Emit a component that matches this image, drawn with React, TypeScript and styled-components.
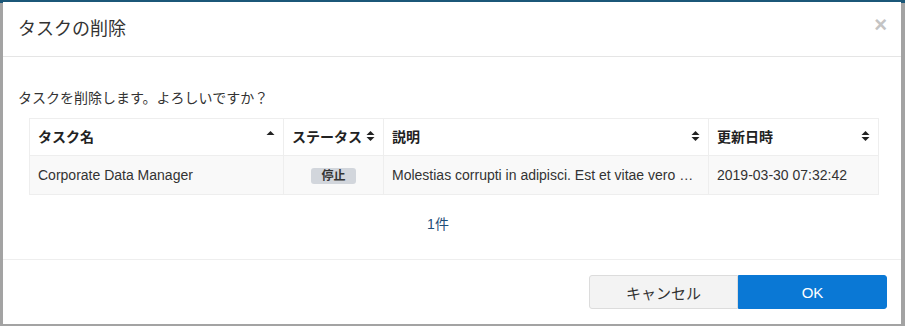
import * as React from 'react';
import styled, { createGlobalStyle } from 'styled-components';

const GlobalStyle = createGlobalStyle`
  html, body {
    margin: 0;
    padding: 0;
    background: #9b9b9b;
  }
  body {
    font-family: "Liberation Sans", "Noto Sans CJK JP", sans-serif;
    color: #333;
  }
`;

const Backdrop = styled.div`
  width: 905px;
  height: 326px;
  overflow: hidden;
  background: linear-gradient(#1b5778 0, #1b5778 3px, #a3a3a3 3px);
  padding: 2px 4px 0 3px;
  box-sizing: border-box;
`;

const Dialog = styled.div`
  width: 898px;
  height: 322px;
  background: #fff;
  display: flex;
  flex-direction: column;
`;

const Header = styled.div`
  height: 55px;
  border-bottom: 1px solid #e5e5e5;
  display: flex;
  align-items: center;
  justify-content: space-between;
  padding: 0 14px 0 15px;
  box-sizing: border-box;
  flex-shrink: 0;
`;

const Title = styled.h4`
  margin: 0;
  font-size: 18px;
  font-weight: normal;
  color: #333;
  line-height: 1;
`;

const Close = styled.span`
  color: #c4c4c4;
  font-size: 22px;
  font-weight: bold;
  line-height: 1;
  margin-top: -8px;
  font-family: "Liberation Sans", sans-serif;
`;

const Body = styled.div`
  flex: 1;
  padding: 31px 15px 0;
  border-bottom: 1px solid #eeeeee;
`;

const Message = styled.p`
  margin: 0 0 10px;
  font-size: 14px;
  line-height: 20px;
`;

const Table = styled.table`
  margin-left: 11px;
  width: 849px;
  border-collapse: collapse;
  table-layout: fixed;
  font-size: 14px;
`;

const Th = styled.th<{ $w: number }>`
  width: ${(p) => p.$w}px;
  height: 37px;
  border: 1px solid #eeeeee;
  padding: 0 8px;
  text-align: left;
  font-weight: bold;
  color: #222;
  box-sizing: border-box;
`;

const ThInner = styled.div`
  display: flex;
  align-items: center;
  justify-content: space-between;
  margin-top: -3px;
`;

const Tr = styled.tr`
  background: #f9f9f9;
`;

const Td = styled.td<{ $center?: boolean }>`
  height: 38px;
  border: 1px solid #eeeeee;
  padding: 0 8px;
  color: #333;
  white-space: nowrap;
  overflow: hidden;
  text-overflow: ellipsis;
  text-align: ${(p) => (p.$center ? 'center' : 'left')};
`;

const Badge = styled.span`
  display: inline-block;
  background: #d2d6dc;
  color: #333;
  font-size: 12px;
  font-weight: bold;
  padding: 1px 10px 0;
  line-height: 15px;
  border-radius: 3px;
  vertical-align: middle;
`;

const Count = styled.div`
  text-align: center;
  margin-top: 18px;
  padding-right: 28px;
  font-size: 14px;
  color: #1f4e79;
`;

const Footer = styled.div`
  height: 64px;
  display: flex;
  justify-content: flex-end;
  align-items: flex-start;
  padding: 15px 14px 0 0;
  box-sizing: border-box;
  flex-shrink: 0;
`;

const Button = styled.button<{ $primary?: boolean }>`
  width: 149px;
  height: 34px;
  font-family: inherit;
  font-size: 15px;
  border: 1px solid ${(p) => (p.$primary ? '#0a78d5' : '#dcdcdc')};
  background: ${(p) => (p.$primary ? '#0a78d5' : '#f3f3f3')};
  color: ${(p) => (p.$primary ? '#fff' : '#333')};
  border-radius: ${(p) => (p.$primary ? '0 3px 3px 0' : '3px 0 0 3px')};
  cursor: pointer;
`;

const SortIcon = ({ asc }: { asc?: boolean }) => (
  <svg width="9" height="12" viewBox="0 0 9 12">
    <path d="M0.5 5 L4.5 1 L8.5 5 Z" fill="#222" />
    {!asc && <path d="M0.5 7 L4.5 11 L8.5 7 Z" fill="#222" />}
  </svg>
);

const columns = [
  { label: 'タスク名', w: 254, asc: true },
  { label: 'ステータス', w: 100 },
  { label: '説明', w: 325 },
  { label: '更新日時', w: 170 },
];

export default function App() {
  return (
    <>
      <GlobalStyle />
      <Backdrop>
        <Dialog>
          <Header>
            <Title>タスクの削除</Title>
            <Close>×</Close>
          </Header>
          <Body>
            <Message>タスクを削除します。よろしいですか？</Message>
            <Table>
              <thead>
                <tr>
                  {columns.map((c) => (
                    <Th key={c.label} $w={c.w}>
                      <ThInner>
                        <span>{c.label}</span>
                        <SortIcon asc={c.asc} />
                      </ThInner>
                    </Th>
                  ))}
                </tr>
              </thead>
              <tbody>
                <Tr>
                  <Td>Corporate Data Manager</Td>
                  <Td $center>
                    <Badge>停止</Badge>
                  </Td>
                  <Td>Molestias corrupti in adipisci. Est et vitae vero quia eum.</Td>
                  <Td>2019-03-30 07:32:42</Td>
                </Tr>
              </tbody>
            </Table>
            <Count>1件</Count>
          </Body>
          <Footer>
            <Button>キャンセル</Button>
            <Button $primary>OK</Button>
          </Footer>
        </Dialog>
      </Backdrop>
    </>
  );
}
